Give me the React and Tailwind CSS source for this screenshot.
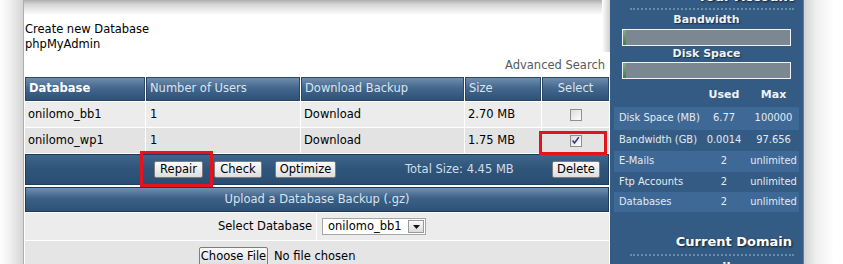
import React from 'react';

const MAIN_FONT = 'font-["DejaVu_Sans",Verdana,sans-serif]';
const SIDE_FONT = 'font-["DejaVu_Sans_Condensed","Liberation_Sans",Tahoma,sans-serif]';

const ROWS = [
  { name: 'onilomo_bb1', users: '1', size: '2.70 MB', checked: false, bg: 'bg-[#ececec]' },
  { name: 'onilomo_wp1', users: '1', size: '1.75 MB', checked: true, bg: 'bg-[#e3e3e3]' },
];

const STATS = [
  { label: 'Disk Space (MB)', used: '6.77', max: '100000', light: true, h: 'h-[23px]' },
  { label: 'Bandwidth (GB)', used: '0.0014', max: '97.656', light: false, h: 'h-[21px]' },
  { label: 'E-Mails', used: '2', max: 'unlimited', light: true, h: 'h-[21px]' },
  { label: 'Ftp Accounts', used: '2', max: 'unlimited', light: false, h: 'h-[20px]' },
  { label: 'Databases', used: '2', max: 'unlimited', light: true, h: 'h-[20px]' },
];

function Btn({ children, className = '' }) {
  return (
    <button
      className={`shrink-0 h-[17px] rounded-[2px] border border-[#7d7d7d] bg-[linear-gradient(#fbfbfb,#dedede)] text-[11.5px] leading-none text-black flex items-center justify-center ${className}`}
    >
      {children}
    </button>
  );
}

function CheckBox({ checked }) {
  return (
    <div className="w-[12px] h-[12px] border border-[#8e8f8f] bg-[linear-gradient(135deg,#dcdcdc,#fdfdfd)] flex items-center justify-center">
      {checked && (
        <svg width="9" height="9" viewBox="0 0 9 9">
          <path d="M1.5 4.5 L3.5 7 L7.8 1.2" fill="none" stroke="#2c3e8c" strokeWidth="1.6" />
        </svg>
      )}
    </div>
  );
}

function Bar() {
  return (
    <div className="mx-[12px] h-[17px] border border-[#eef2f6] bg-[#7c8891] flex">
      <div className="w-[3px] h-full bg-[linear-gradient(#7fb27f,#3f7f46)]" />
    </div>
  );
}

function Dots({ className = '' }) {
  return <div className={`ml-[20px] mr-[9px] border-t-2 border-dotted border-[#6a8aab] ${className}`} />;
}

export default function App() {
  return (
    <div className={`relative w-[843px] h-[264px] overflow-hidden bg-white flex items-start ${MAIN_FONT}`}>
      {/* left page shadow */}
      <div className="shrink-0 w-[24px] h-[264px] border-r border-[#9fb1c6] bg-[linear-gradient(to_right,#ffffff,#f1f1f1_40%,#d6d6d6)]" />

      {/* main content */}
      <div className="relative shrink-0 w-[586px] text-[11.5px] text-black">
        <div className="h-[15px] bg-[linear-gradient(#aeaeae,#d6d6d6_30%,#ffffff)]" />
        <div className="absolute right-0 top-0 w-[8px] h-[52px] bg-[linear-gradient(to_right,#ffffff,#cfcfcf)]" />

        <div className="mt-[7px] pl-[1px] leading-[15px]">
          <div>Create new Database</div>
          <div>phpMyAdmin</div>
        </div>

        <div className="mt-[6px] leading-[15px] text-right pr-[5px] text-[#555a5a]">Advanced Search</div>

        <div className="mt-[4px] ml-[1px] w-[584px]">
          {/* header */}
          <div className="grid grid-cols-[120px_154px_163px_76px_1fr] gap-x-[1px] h-[24px]">
            {['Database', 'Number of Users', 'Download Backup', 'Size', 'Select'].map((h, i) => (
              <div
                key={h}
                className={`border border-[#2a4766] bg-[linear-gradient(#6e8dae,#44688d_45%,#2d5177)] flex items-center ${
                  i === 4 ? 'justify-center' : 'pl-[3px]'
                } ${i === 0 ? 'font-bold text-white' : 'text-[#dce5ef]'}`}
              >
                {h}
              </div>
            ))}
          </div>

          {/* rows */}
          {ROWS.map((r) => (
            <div key={r.name} className="grid grid-cols-[120px_154px_163px_76px_1fr] gap-x-[1px] h-[25px] mt-[1px]">
              <div className={`${r.bg} flex items-center pl-[3px]`}>{r.name}</div>
              <div className={`${r.bg} flex items-center pl-[4px]`}>{r.users}</div>
              <div className={`${r.bg} flex items-center pl-[3px]`}>Download</div>
              <div className={`${r.bg} flex items-center pl-[3px]`}>{r.size}</div>
              <div className={`${r.bg} flex items-center justify-center`}>
                <CheckBox checked={r.checked} />
              </div>
            </div>
          ))}

          {/* action bar */}
          <div className="mt-[1px] h-[31px] border border-[#1f3b59] bg-[linear-gradient(#3f658b,#2f547a_50%,#2a4e73)] flex items-center pl-[128px]">
            <Btn className="w-[49px]">Repair</Btn>
            <Btn className="w-[48px] ml-[11px]">Check</Btn>
            <Btn className="w-[61px] ml-[13px]">Optimize</Btn>
            <span className="ml-[69px] text-[#d3dde8] whitespace-nowrap">Total Size: 4.45 MB</span>
            <Btn className="w-[48px] ml-auto mr-[8px]">Delete</Btn>
          </div>

          {/* upload header */}
          <div className="mt-[2px] h-[25px] border border-[#1f3b59] bg-[linear-gradient(#6f8eae,#3c6187_45%,#2d5177)] flex items-center justify-center text-[#dae3ed]">
            Upload a Database Backup (.gz)
          </div>

          <div className="mt-[1px] h-[27px] flex gap-x-[1px]">
            <div className="w-[291px] bg-[#ececec] flex items-center justify-end pr-[4px]">Select Database</div>
            <div className="flex-1 bg-[#ececec] flex items-center pl-[5px]">
              <div className="w-[104px] h-[17px] border border-[#a5a5a5] bg-white flex items-center justify-between pl-[5px] pr-[1px]">
                <span>onilomo_bb1</span>
                <div className="w-[16px] h-[13px] border border-[#9a9a9a] bg-[linear-gradient(#fafafa,#dcdcdc)] flex items-center justify-center">
                  <svg width="7" height="4" viewBox="0 0 7 4">
                    <path d="M0 0 H7 L3.5 4 Z" fill="#111" />
                  </svg>
                </div>
              </div>
            </div>
          </div>

          <div className="mt-[1px] h-[30px] bg-[#e5e5e5] flex items-start pt-[6px] pl-[174px]">
            <Btn className="w-[69px] h-[19px]">Choose File</Btn>
            <span className="ml-[6px] leading-[19px]">No file chosen</span>
          </div>
        </div>
      </div>

      {/* sidebar */}
      <div className="shrink-0 w-[194px] h-[264px] bg-[#345b83] border-r border-[#5c7fa2]">
        <div className="-mt-[11px] pr-[9px] h-[16px] leading-[16px] text-right text-[13px] font-bold text-white [text-shadow:1px_1px_2px_#0f1f30]">
          Your Account
        </div>
        <Dots className="mt-[3px]" />
        <div className="mt-[4px] leading-[12px] text-center text-[11px] font-bold text-[#eef3f8] [text-shadow:1px_1px_1px_#1b3047]">Bandwidth</div>
        <div className="mt-[3px]"><Bar /></div>
        <div className="mt-[2px] leading-[12px] text-center text-[11px] font-bold text-[#eef3f8] [text-shadow:1px_1px_1px_#1b3047]">Disk Space</div>
        <div className="mt-[2px]"><Bar /></div>

        <div className="mt-[10px] mx-[4px] grid grid-cols-[86px_48px_1fr] leading-[12px] text-[11px] font-bold text-[#eef3f8]">
          <div />
          <div className="text-center">Used</div>
          <div className="text-center">Max</div>
        </div>

        <div className={`mt-[6px] mx-[4px] text-[11px] text-[#e4ebf2] ${SIDE_FONT}`}>
          {STATS.map((s) => (
            <div
              key={s.label}
              className={`${s.h} grid grid-cols-[86px_48px_1fr] items-center ${s.light ? 'bg-[#3e6895]' : ''}`}
            >
              <div className="pl-[5px] whitespace-nowrap">{s.label}</div>
              <div className="text-center">{s.used}</div>
              <div className="text-center">{s.max}</div>
            </div>
          ))}
        </div>

        <div className="mt-[23px] pr-[11px] leading-[14px] text-right text-[13px] font-bold text-white [text-shadow:1px_1px_2px_#0f1f30]">
          Current Domain
        </div>
        <Dots className="mt-[5px]" />
        <div className="mt-[5px] pr-[11px] leading-[14px] text-right text-[12px] font-bold text-white">onilomo.com</div>
      </div>

      {/* right page shadow */}
      <div className="flex-1 h-[264px] bg-[linear-gradient(to_right,#d2d2d2,#efefef_12px,#ffffff_30px)]" />

      {/* annotation boxes */}
      <div className="absolute left-[140px] top-[151px] w-[73px] h-[36px] border-[3px] border-[#e3141d]" />
      <div className="absolute left-[539px] top-[131px] w-[68px] h-[24px] border-[3px] border-[#e3141d]" />
    </div>
  );
}
